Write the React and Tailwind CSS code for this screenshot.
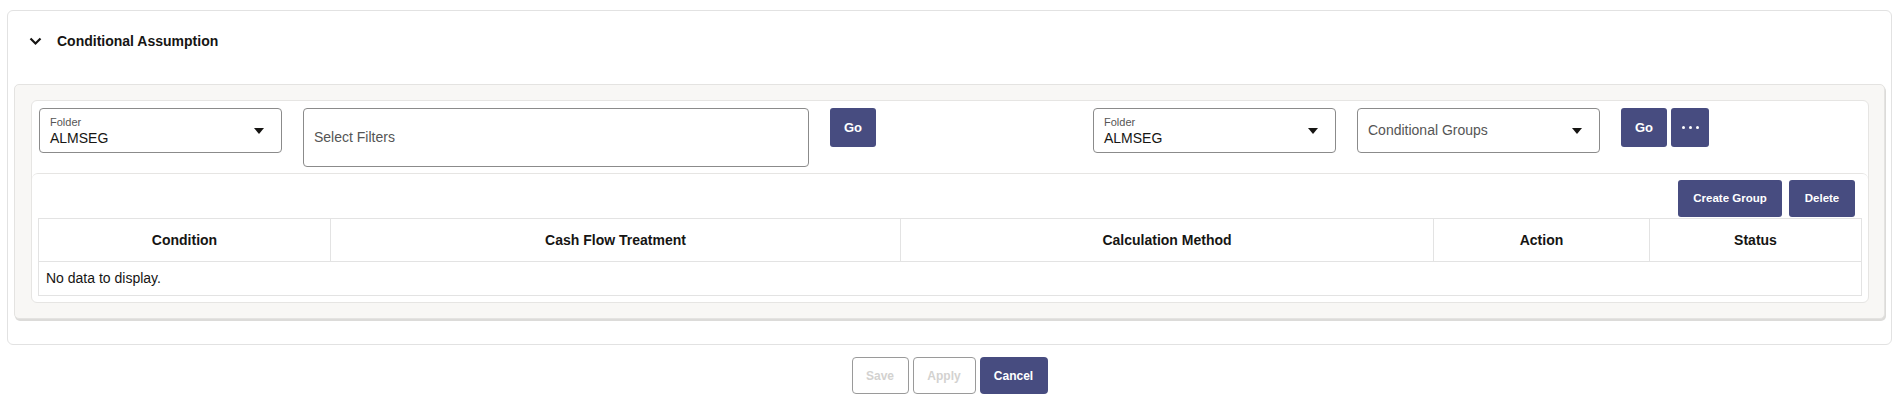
import React from "react";

const font = { fontFamily: '"Liberation Sans", Arial, sans-serif' };

const Caret = () => (
  <svg width="10" height="6" viewBox="0 0 10 6" className="shrink-0">
    <path d="M0 0 L10 0 L5 6 Z" fill="#161513" />
  </svg>
);

const FolderSelect = () => (
  <div className="w-[243px] h-[45px] border border-[#8b8b8b] rounded-[4px] bg-white flex items-center pl-[10px] pr-[17px]">
    <div className="flex-1 flex flex-col leading-none">
      <span className="text-[11px] text-[#555] mb-[3px]">Folder</span>
      <span className="text-[14px] text-[#161513]">ALMSEG</span>
    </div>
    <Caret />
  </div>
);

const PurpleButton = ({ children, className = "" }) => (
  <button
    className={`bg-[#474c80] text-white font-bold rounded-[3px] flex items-center justify-center ${className}`}
  >
    {children}
  </button>
);

const columns = ["Condition", "Cash Flow Treatment", "Calculation Method", "Action", "Status"];

export default function App() {
  return (
    <div className="w-full h-[399px] bg-white pt-[10px] pl-[7px] pr-[5px]" style={font}>
      {/* outer card */}
      <div className="h-[335px] border border-[#e2e2e2] rounded-[6px] flex flex-col">
        <div className="h-[73px] flex items-start pt-[21px] pl-[21px]">
          <svg width="13" height="9" viewBox="0 0 13 9" className="mt-[5px]">
            <path d="M1.5 1.5 L6.5 6.5 L11.5 1.5" fill="none" stroke="#161513" strokeWidth="2.2" />
          </svg>
          <span className="ml-[15px] text-[14px] font-bold text-[#161513] leading-[18px]">
            Conditional Assumption
          </span>
        </div>

        {/* gray panel */}
        <div className="mx-[6px] h-[235px] bg-[#f8f7f5] border border-[#e4e3e1] rounded-[5px] shadow-[1px_2px_0_#dcdbd9] pt-[15px] pl-[16px] pr-[15px]">
          <div className="h-[203px] bg-white border border-[#e6e5e3] rounded-[6px] flex flex-col">
            {/* filter row */}
            <div className="h-[72px] flex items-start pt-[7px] pl-[7px]">
              <FolderSelect />
              <div className="ml-[21px] w-[506px] h-[59px] border border-[#8b8b8b] rounded-[4px] flex items-center pl-[10px] text-[14px] text-[#555]">
                Select Filters
              </div>
              <PurpleButton className="ml-[21px] w-[46px] h-[39px] text-[13px]">Go</PurpleButton>
              <div className="ml-[217px]">
                <FolderSelect />
              </div>
              <div className="ml-[21px] w-[243px] h-[45px] border border-[#8b8b8b] rounded-[4px] flex items-center pl-[10px] pr-[17px]">
                <span className="flex-1 text-[14px] text-[#555]">Conditional Groups</span>
                <Caret />
              </div>
              <PurpleButton className="ml-[21px] w-[46px] h-[39px] text-[13px]">Go</PurpleButton>
              <PurpleButton className="ml-[4px] w-[38px] h-[39px] gap-[4px]">
                <span className="w-[3px] h-[3px] rounded-full bg-white" />
                <span className="w-[3px] h-[3px] rounded-full bg-white" />
                <span className="w-[3px] h-[3px] rounded-full bg-white" />
              </PurpleButton>
            </div>

            {/* table section */}
            <div className="flex-1 border-t border-[#e6e5e3] rounded-t-[6px] flex flex-col px-[6px]">
              <div className="flex justify-end gap-[7px] pt-[6px] pr-[7px]">
                <PurpleButton className="w-[104px] h-[37px] text-[11.5px]">Create Group</PurpleButton>
                <PurpleButton className="w-[66px] h-[37px] text-[11.5px]">Delete</PurpleButton>
              </div>
              <div className="border border-[#e3e3e3] mt-[1px]">
                <div className="grid grid-cols-[292px_570px_533px_216px_1fr] h-[43px] border-b border-[#e3e3e3]">
                  {columns.map((c, i) => (
                    <div
                      key={c}
                      className={`flex items-center justify-center text-[14px] font-bold text-[#161513] ${
                        i < columns.length - 1 ? "border-r border-[#e3e3e3]" : ""
                      }`}
                    >
                      {c}
                    </div>
                  ))}
                </div>
                <div className="h-[33px] flex items-center pl-[7px] text-[14px] text-[#161513]">
                  No data to display.
                </div>
              </div>
            </div>
          </div>
        </div>
      </div>

      {/* footer buttons */}
      <div className="flex justify-center gap-[4px] mt-[12px]">
        <button className="w-[57px] h-[37px] border border-[#9a9a9a] rounded-[4px] text-[12px] font-bold text-[#d3d2d0] bg-white">
          Save
        </button>
        <button className="w-[63px] h-[37px] border border-[#9a9a9a] rounded-[4px] text-[12px] font-bold text-[#d3d2d0] bg-white">
          Apply
        </button>
        <PurpleButton className="w-[68px] h-[37px] text-[12px] rounded-[4px]">Cancel</PurpleButton>
      </div>
    </div>
  );
}
